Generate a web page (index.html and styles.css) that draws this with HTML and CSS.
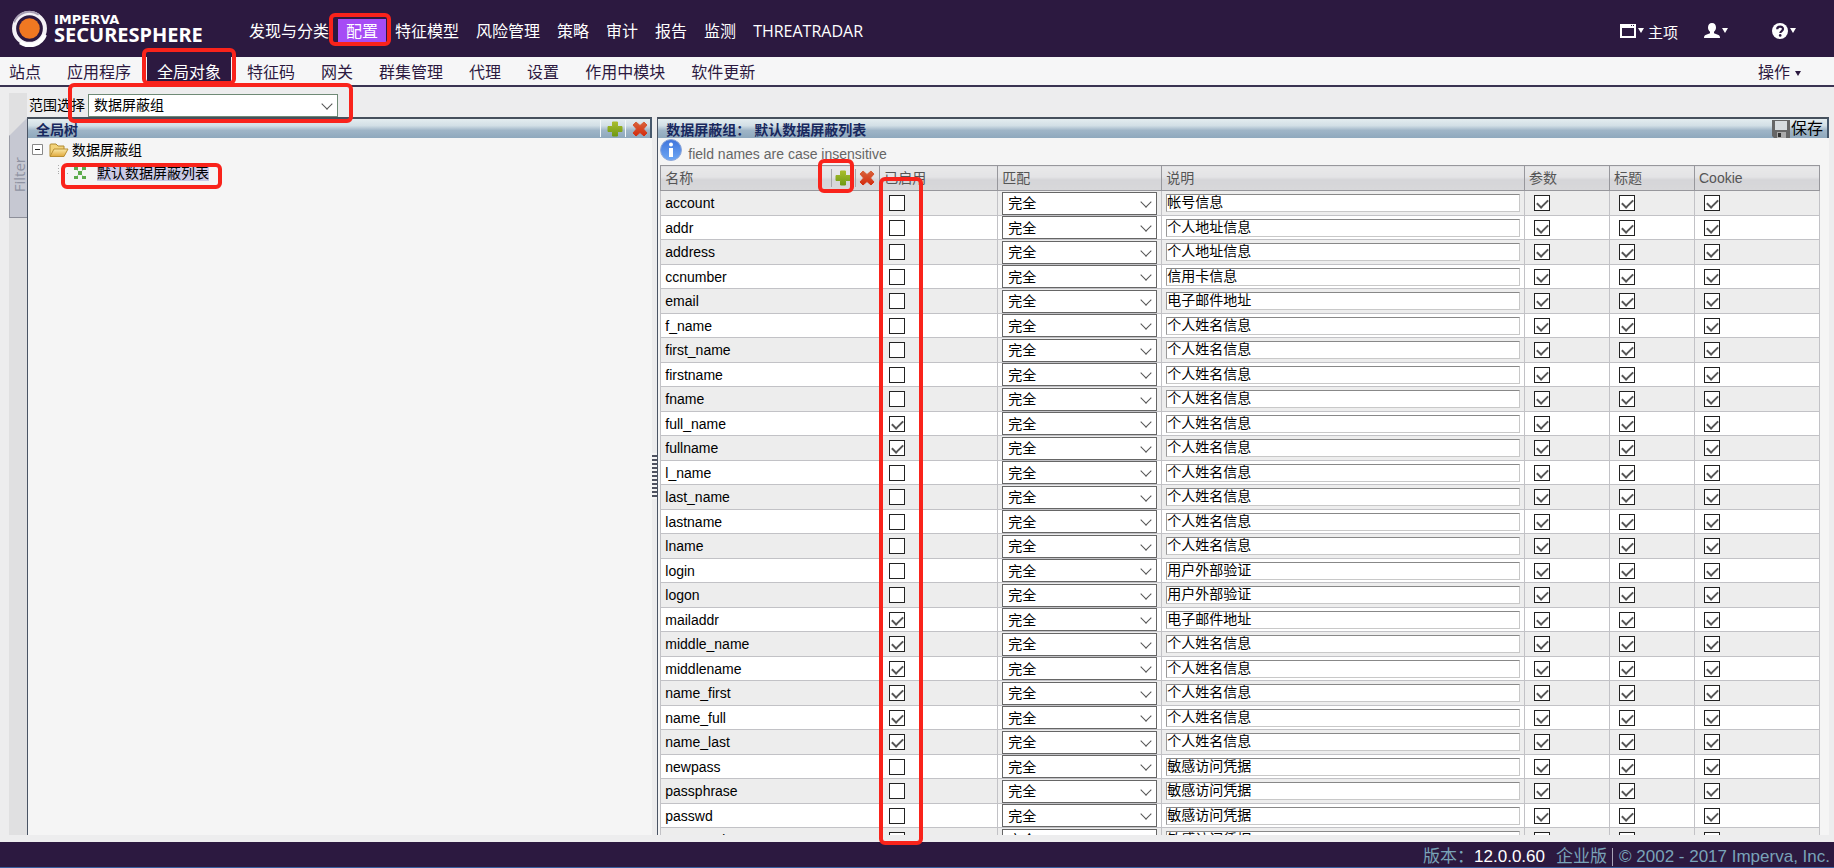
FILE: index.html
```html
<!DOCTYPE html>
<html lang="zh-CN">
<head>
<meta charset="utf-8">
<title>SecureSphere</title>
<link rel="stylesheet" href="styles.css">
</head>
<body>
<svg class="defs" aria-hidden="true">
  <defs>
    <linearGradient id="g-add" x1="0" y1="0" x2="0" y2="1"><stop offset="0" stop-color="#a9bd2c"/><stop offset="1" stop-color="#6f9a14"/></linearGradient>
    <linearGradient id="g-del" x1="0" y1="0" x2="0" y2="1"><stop offset="0" stop-color="#d8643c"/><stop offset="1" stop-color="#d42a0c"/></linearGradient>
    <linearGradient id="g-info" x1="0" y1="0" x2="0" y2="1"><stop offset="0" stop-color="#3f74dc"/><stop offset="1" stop-color="#6fa8f4"/></linearGradient>
    <linearGradient id="g-fold" x1="0" y1="0" x2="0" y2="1"><stop offset="0" stop-color="#fbe9a8"/><stop offset="1" stop-color="#e0a93c"/></linearGradient>
    <symbol id="i-add" viewBox="0 0 16 16"><path d="M5.500 1h5v4.500H15v5h-4.500V15h-5v-4.500H1v-5h4.500z" fill="url(#g-add)" stroke="url(#g-add)" stroke-linejoin="round"/></symbol>
    <symbol id="i-del" viewBox="0 0 16 16"><path d="M4 1l4 3.500L12 1l3 3-3.500 4 3.500 4-3 3-4-3.500L4 15l-3-3 3.500-4L1 4z" fill="url(#g-del)" stroke="url(#g-del)" stroke-linejoin="round"/></symbol>
  </defs>
</svg>

<header class="topbar">
  <a class="logo" href="#">
    <svg class="logo-mark" viewBox="0 0 36 36" aria-hidden="true">
      <circle cx="18" cy="18" r="15" fill="none" stroke="#f4f1f6" stroke-width="4"/>
      <path d="M3 12A16 16 0 0 1 27 4.500" fill="none" stroke="#a99fb5" stroke-width="2"/>
      <path d="M33 24A16 16 0 0 1 9 31.500" fill="none" stroke="#fff" stroke-width="4"/>
      <circle cx="18" cy="18" r="10" fill="#f07822"/>
    </svg>
    <span class="logo-text"><span class="logo-small">IMPERVA</span><span class="logo-big">SECURESPHERE</span></span>
  </a>
  <nav class="mainnav">
    <a href="#">发现与分类</a><a href="#" class="active">配置</a><a href="#">特征模型</a><a href="#">风险管理</a><a href="#">策略</a><a href="#">审计</a><a href="#">报告</a><a href="#">监测</a><a href="#">THREATRADAR</a>
  </nav>
  <div class="tools">
    <button type="button">
      <svg class="tool-icon" viewBox="0 0 16 16" aria-hidden="true"><path fill="#fff" fill-rule="evenodd" d="M0 1h16v14H0zM2 5v8h12V5zM11 2h1v1h-1zM13 2h1v1h-1z"/></svg><span class="caret"></span><span class="tool-label">主项</span>
    </button>
    <button type="button" aria-label="User">
      <svg class="tool-icon" viewBox="0 0 16 16" aria-hidden="true"><path fill="#fff" d="M8 0c2.600 0 4 2 4 4.500 0 2-.9 3.500-2 4.300v1.400l4.500 1.800c1 .5 1.500 1.300 1.500 3H0c0-1.700.5-2.500 1.500-3L6 10.200V8.800C4.900 8 4 6.500 4 4.500 4 2 5.400 0 8 0z"/></svg><span class="caret"></span>
    </button>
    <button type="button" aria-label="Help">
      <svg class="tool-icon" viewBox="0 0 16 16" aria-hidden="true"><circle cx="8" cy="8" r="8" fill="#fff"/><path d="M5.200 6.200C5.200 2.800 11 2.800 11 6.100c0 2-2.700 1.900-2.700 4" fill="none" stroke="#2c1940" stroke-width="2.200"/><circle cx="8.200" cy="12.400" r="1.300" fill="#2c1940"/></svg><span class="caret"></span>
    </button>
  </div>
</header>

<nav class="subnav">
  <a href="#">站点</a><a href="#">应用程序</a><a href="#" class="active">全局对象</a><a href="#">特征码</a><a href="#">网关</a><a href="#">群集管理</a><a href="#">代理</a><a href="#">设置</a><a href="#">作用中模块</a><a href="#">软件更新</a>
  <button type="button" class="actions">操作<span class="caret dark"></span></button>
</nav>

<main class="workspace">
  <aside class="rail"><button type="button" class="filter-tab"><span>Filter</span></button></aside>
  <div class="content">
    <div class="scope">
      <label for="scope">范围选择</label>
      <span class="pick scope-pick"><select id="scope"><option>数据屏蔽组</option></select></span>
    </div>
    <div class="panes">
      <section class="pane tree-pane">
        <div class="pane-head">
          <h2>全局树</h2>
          <span class="head-tools">
            <button type="button" aria-label="Add"><svg><use href="#i-add"/></svg></button>
            <button type="button" aria-label="Delete"><svg><use href="#i-del"/></svg></button>
          </span>
        </div>
        <ul class="tree">
          <li class="tree-root">
            <svg class="toggle" viewBox="0 0 11 11" aria-hidden="true"><path d="M.5.5h10v10H.5z" fill="#fff" stroke="#888"/><path d="M3 5.500h5" stroke="#222"/></svg>
            <svg class="folder" viewBox="0 0 20 16" aria-hidden="true"><path d="M1 14V3q0-1 1-1h5l2 2h6v3" fill="#f3d37a" stroke="#b08a30"/><path d="M1 14.500L5 7h14l-4 7.500z" fill="url(#g-fold)" stroke="#b98f34"/></svg>
            <span>数据屏蔽组</span>
          </li>
          <li class="tree-leaf">
            <svg class="branch" viewBox="0 0 12 16" aria-hidden="true"><path d="M.5 0v9M0 8.500h12" fill="none" stroke="#aaa" stroke-dasharray="1 2"/></svg>
            <svg class="leaf-icon" viewBox="0 0 12 12" aria-hidden="true"><path d="M2 2l8 8M10 2l-8 8" stroke="#b9d8b4"/><g fill="#5cab4c"><path d="M0 0h4v3H0zM8 0h4v3H8zM4 4h4v4H4zM0 9h4v3H0zM8 9h4v3H8z"/></g></svg>
            <a href="#" class="selected">默认数据屏蔽列表</a>
          </li>
        </ul>
      </section>
      <div class="splitter"><span></span></div>
      <section class="pane list-pane">
        <div class="pane-head">
          <h2>数据屏蔽组： 默认数据屏蔽列表</h2>
          <button type="button" class="save"><svg viewBox="0 0 18 18" aria-hidden="true"><path d="M0 0h18v18H2l-2-2z" fill="#666"/><path d="M3 1h12v9H3z" fill="#d7dcdf"/><path d="M5 12h9v6H5z" fill="#aaa"/><path d="M6 13h3v4H6z" fill="#333"/></svg>保存</button>
        </div>
        <p class="info">
          <svg viewBox="0 0 22 22" aria-hidden="true"><circle cx="11" cy="11" r="10.500" fill="url(#g-info)" stroke="#90a8d8"/><circle cx="11" cy="5.500" r="2" fill="#fff"/><path d="M9 9h4v9H9z" fill="#fff"/></svg>
          <span>field names are case insensitive</span>
        </p>
        <div class="table-wrap">
          <table class="fields">
            <colgroup><col class="c-name"><col class="c-on"><col class="c-match"><col class="c-desc"><col class="c-flag"><col class="c-flag"><col class="c-cookie"></colgroup>
            <thead>
              <tr>
                <th scope="col"><div class="name-head">名称<span class="head-tools">
                  <button type="button" aria-label="Add"><svg><use href="#i-add"/></svg></button>
                  <button type="button" aria-label="Delete"><svg><use href="#i-del"/></svg></button>
                </span></div></th>
                <th scope="col">已启用</th><th scope="col">匹配</th><th scope="col">说明</th><th scope="col">参数</th><th scope="col">标题</th><th scope="col">Cookie</th>
              </tr>
            </thead>
            <tbody id="rows"></tbody>
          </table>
        </div>
      </section>
    </div>
  </div>
</main>

<footer class="footer">
  <span>版本：</span><span class="version">12.0.0.60</span><span class="edition">企业版</span><span class="copy">© 2002 - 2017 Imperva, Inc.</span>
</footer>

<div class="mark mark-config"></div>
<div class="mark mark-global"></div>
<div class="mark mark-scope"></div>
<div class="mark mark-list"></div>
<div class="mark mark-add"></div>
<div class="mark mark-enabled"></div>
<script src="app.js"></script>
</body>
</html>
```
FILE: styles.css
```css
* { box-sizing: border-box; }
body {
  margin: 0;
  height: 100vh;
  display: flex;
  flex-direction: column;
  overflow: hidden;
  background: #ededee;
  color: #000;
  font: 14px/20px "Liberation Sans", "Noto Sans CJK SC", sans-serif;
}
button, select, input { font: inherit; color: inherit; }
button { border: 0; padding: 0; background: none; display: inline-flex; align-items: center; }
a { color: inherit; text-decoration: none; }
.defs { position: absolute; width: 0; height: 0; }

/* top bar */
.topbar {
  flex: none;
  height: 57px;
  padding: 0 38px 0 11px;
  display: flex;
  align-items: center;
  background: #2c1940;
  color: #fff;
}
.logo { display: flex; align-items: center; gap: 6px; width: 230px; }
.logo-mark { width: 37px; height: 37px; }
.logo-text { display: flex; flex-direction: column; padding-bottom: 2px; font-weight: 700; }
.logo-small { font-family: "DejaVu Sans", sans-serif; font-size: 13px; line-height: 14px; }
.logo-big { font-family: "Noto Sans", sans-serif; font-size: 20px; line-height: 16px; }
.mainnav { display: flex; gap: 1px; font: 16px/24px "Open Sans", "Noto Sans CJK SC", sans-serif; padding-top: 5px; }
.mainnav a { padding: 0 8px; white-space: nowrap; }
.mainnav .active { background: #a64cf5; }
.tools { margin-left: auto; display: flex; align-items: center; padding-top: 4px; }
.tools button { gap: 2px; margin-left: 26px; }
.tools button:last-child { margin-left: 44px; }
.tool-icon { width: 16px; height: 16px; }
.tool-label { font-size: 15px; margin-left: 2px; padding-top: 4px; }
.caret { border: 3px solid transparent; border-top: 5px solid #fff; border-bottom: 0; }
.caret.dark { border-top-color: #2c1940; margin-left: 5px; }

/* second level navigation */
.subnav {
  flex: none;
  height: 30px;
  padding: 0 33px 0 0;
  display: flex;
  gap: 6px;
  background: #f6f6f7;
  border-bottom: 2px solid #3a3352;
  color: #2c1940;
  font-size: 16px;
  line-height: 24px;
}
.subnav a { padding: 4px 10px 0; white-space: nowrap; }
.subnav a:first-child { padding-left: 9px; }
.subnav .active { background: #2c1940; color: #fff; }
.actions { margin-left: auto; padding-top: 4px; }

/* workspace */
.workspace { flex: 1; min-height: 0; display: flex; padding: 0 5px 7px 9px; }
.rail { flex: none; width: 18px; margin-top: 6px; padding-top: 25px; background: #e0e0e1; }
.filter-tab {
  width: 18px;
  height: 100px;
  justify-content: center;
  background: #c6c8d2;
  border-bottom: 1px solid #8d8f99;
  border-left: 1px solid #9a9ca6;
  clip-path: polygon(0 18px, 100% 0, 100% 100%, 0 100%);
  color: #8f93a2;
  font: 15px/18px "Open Sans", sans-serif;
}
.filter-tab span { writing-mode: vertical-rl; transform: rotate(180deg); padding-bottom: 14px; }
.content { flex: 1; min-width: 0; display: flex; flex-direction: column; }
.scope { flex: none; height: 30px; padding: 6px 0 0 2px; display: flex; align-items: center; gap: 3px; }
.pick { position: relative; display: block; }
.pick select {
  appearance: none;
  display: block;
  width: 100%;
  height: 23px;
  padding: 0 5px;
  background: #fff;
  border: 1px solid #707070;
  border-radius: 0;
}
.pick::after {
  content: "";
  position: absolute;
  right: 7px;
  top: 6px;
  width: 7px;
  height: 7px;
  border: solid #555;
  border-width: 0 1px 1px 0;
  transform: rotate(45deg);
  pointer-events: none;
}
.scope-pick { width: 250px; }
.scope-pick select { border-color: #6f8a76; }
.panes { flex: 1; min-height: 0; display: flex; }
.pane { min-width: 0; display: flex; flex-direction: column; overflow: hidden; background: #f5f5f5; border-left: 1px solid #4a5464; }
.tree-pane { flex: 0 0 34.700%; }
.list-pane { flex: 1; }
.pane-head {
  flex: none;
  height: 21px;
  display: flex;
  align-items: center;
  justify-content: space-between;
  padding-left: 8px;
  border-top: 2px solid #46505c;
  border-right: 2px solid #46586c;
  background: linear-gradient(#e4edf0, #d2dfe6 35%, #9fb5c7 60%, #8ea8bd);
}
.pane-head h2 { margin: 0; font-size: 14px; line-height: 20px; color: #18285e; padding-top: 3px; }
.head-tools { display: flex; align-items: center; }
.head-tools button { width: 25px; height: 17px; padding-left: 6px; border-left: 1px solid #f4f8fa; }
.head-tools svg { width: 16px; height: 16px; }
.save { font-size: 16px; gap: 1px; margin-right: 4px; }
.save svg { width: 18px; height: 18px; }
.splitter { flex: none; width: 5px; display: flex; align-items: center; background: #ececed; }
.splitter span { width: 5px; height: 46px; background: repeating-linear-gradient(#f5f5f5 0 2px, #4f5260 2px 4px); }

/* tree */
.tree { list-style: none; margin: 0; padding: 0 0 0 4px; }
.tree li { display: flex; align-items: center; height: 23px; }
.toggle { width: 11px; height: 11px; }
.folder { width: 20px; height: 16px; margin: 0 3px 0 6px; }
.branch { width: 12px; height: 16px; margin: 0 4px 0 26px; }
.leaf-icon { width: 12px; height: 12px; }
.selected { margin-left: 11px; line-height: 16px; background: #c9c9e6; }

/* list */
.info { flex: none; height: 27px; margin: 0; padding: 0 0 3px 2px; display: flex; align-items: center; gap: 6px; color: #666; font-size: 14px; }
.info svg { width: 22px; height: 22px; }
.info span { padding-top: 7px; }
.table-wrap { flex: 1; min-height: 0; overflow: auto; scrollbar-width: none; padding: 0 9px 0 2px; }
.fields { width: 100%; table-layout: fixed; border-collapse: collapse; }
.c-name { width: 219px; }
.c-on { width: 118px; }
.c-match { width: 164px; }
.c-flag { width: 85px; }
.c-cookie { width: 125px; }
.fields th, .fields td { height: 24px; padding: 0 4px; text-align: left; font-weight: 400; white-space: nowrap; }
.fields th { height: 25px; color: #555; border: 1px solid #97979c; background: linear-gradient(#e9e9ea, #e3e3e5 45%, #d5d5d8 55%, #d8d8da); }
.fields td { border: 1px solid #c2c2c6; background: #fff; line-height: 20px; }
.fields tr:nth-child(odd) td { height: 25px; background: #ededed; }
.fields thead tr:nth-child(odd) th { height: 25px; }
.fields th:first-child { padding-right: 0; }
.name-head { display: flex; justify-content: space-between; align-items: center; }
.name-head .head-tools button { height: 18px; width: 24px; padding-left: 3px; border-left-color: #a5a5aa; }
.fields .pick select { height: 23px; border-color: #666; }
.fields .match { padding: 0 4px; }
.fields input[type="text"] {
  display: block;
  width: 100%;
  height: 18px;
  padding: 0 0 2px;
  border: 1px solid #c8c8c8;
  border-top-color: #888;
  border-left-color: #999;
  background: #fff;
}
.fields input[type="checkbox"] {
  appearance: none;
  position: relative;
  display: block;
  width: 16px;
  height: 16px;
  margin: 0 0 0 5px;
  background: #fff;
  border: 1px solid #222;
}
.fields input[type="checkbox"]:checked::after {
  content: "";
  position: absolute;
  left: 4px;
  top: 1px;
  width: 5px;
  height: 9px;
  border: solid #555;
  border-width: 0 2px 2px 0;
  transform: rotate(45deg);
}

/* footer */
.footer {
  flex: none;
  height: 26px;
  padding: 4px 4px 0 0;
  display: flex;
  justify-content: flex-end;
  align-items: center;
  background: #2c1940;
  border-bottom: 1px solid #3b5fa0;
  color: #79a3b8;
  font-size: 17px;
  line-height: 18px;
}
.version { color: #fff; margin-right: 11px; }
.copy { margin-left: 5px; padding-left: 6px; border-left: 1px solid #a9a3b8; }

/* highlight frames lying over the page */
.mark { position: absolute; border: 4px solid #f9231b; border-radius: 6px; pointer-events: none; }
.mark-config { left: 329px; top: 13px; width: 62px; height: 33px; }
.mark-global { left: 142px; top: 48px; width: 94px; height: 37px; }
.mark-scope { left: 68px; top: 83px; width: 285px; height: 40px; }
.mark-list { left: 61px; top: 163px; width: 161px; height: 26px; }
.mark-add { left: 818px; top: 159px; width: 36px; height: 34px; }
.mark-enabled { left: 879px; top: 177px; width: 44px; height: 668px; }
```
FILE: app.js
```js
const person = "个人姓名信息";
const secret = "敏感访问凭据";
const fields = [
  ["account", 0, "帐号信息"], ["addr", 0, "个人地址信息"], ["address", 0, "个人地址信息"],
  ["ccnumber", 0, "信用卡信息"], ["email", 0, "电子邮件地址"], ["f_name", 0, person],
  ["first_name", 0, person], ["firstname", 0, person], ["fname", 0, person],
  ["full_name", 1, person], ["fullname", 1, person], ["l_name", 0, person],
  ["last_name", 0, person], ["lastname", 0, person], ["lname", 0, person],
  ["login", 0, "用户外部验证"], ["logon", 0, "用户外部验证"], ["mailaddr", 1, "电子邮件地址"],
  ["middle_name", 1, person], ["middlename", 1, person], ["name_first", 1, person],
  ["name_full", 1, person], ["name_last", 1, person], ["newpass", 0, secret],
  ["passphrase", 0, secret], ["passwd", 0, secret], ["password", 0, secret]
];
const box = (label, on) => `<td><input type="checkbox" aria-label="${label}"${on ? " checked" : ""}></td>`;
document.getElementById("rows").innerHTML = fields.map(([name, on, desc]) => `<tr>
  <td>${name}</td>${box(name + " 已启用", on)}
  <td class="match"><span class="pick"><select aria-label="${name} 匹配"><option>完全</option></select></span></td>
  <td><input type="text" aria-label="${name} 说明" value="${desc}"></td>
  ${box(name + " 参数", 1)}${box(name + " 标题", 1)}${box(name + " Cookie", 1)}
</tr>`).join("");
```
